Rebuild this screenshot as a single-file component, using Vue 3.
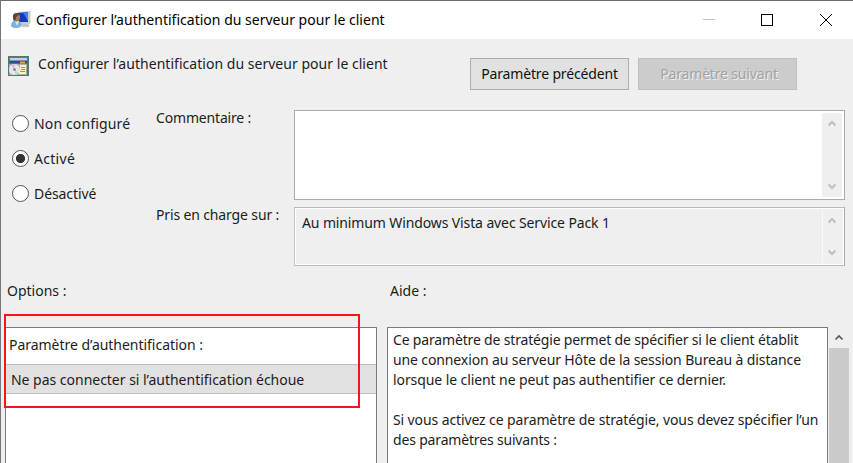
<script setup>
import { ref } from 'vue'

const state = ref('on')
const choices = [
  { id: 'none', label: 'Non configuré' },
  { id: 'on', label: 'Activé' },
  { id: 'off', label: 'Désactivé' },
]
const help = [
  'Ce paramètre de stratégie permet de spécifier si le client établit',
  'une connexion au serveur Hôte de la session Bureau à distance',
  'lorsque le client ne peut pas authentifier ce dernier.',
  '',
  'Si vous activez ce paramètre de stratégie, vous devez spécifier l’un',
  'des paramètres suivants :',
]
</script>

<template>
  <div class="window">
    <header class="titlebar">
      <svg class="app-icon" width="20" height="18" viewBox="0 0 20 18">
        <path d="M6 1 19.500 0v12l-3 2H6z" fill="#c9cbc9" />
        <path d="M7 2 17 1v10H7z" fill="#1238c8" />
        <path d="M12 1.500 17 1v9z" fill="#3d7df0" />
        <path d="M11 13h6l2 2-2 1h-6z" fill="#c5c3bc" />
        <path d="M0 15q0-5 5-6 5 1 6 5-1 3-6 3-4 0-5-2" fill="#7ab4dc" />
        <path d="M4 10l2 5 2-5z" fill="#d8edf8" />
        <ellipse cx="5.500" cy="6.500" rx="3.500" ry="4" fill="#a87a54" />
        <path d="M2 7q-1-5 4-5 3 0 3 2-4 0-4 4l-2 2z" fill="#54483c" />
      </svg>
      <span class="title">Configurer l’authentification du serveur pour le client</span>
      <svg class="controls" width="132" height="14" viewBox="0 0 132 14" fill="none" shape-rendering="crispEdges">
        <path d="M1 7.500h12" stroke="#c4c4c4" />
        <path d="M59.500 2.500h11v11h-11z" stroke="#000" />
        <path d="M118 2l12 12M130 2l-12 12" stroke="#000" shape-rendering="auto" />
      </svg>
    </header>

    <section class="heading">
      <svg class="policy-icon" width="21" height="21" viewBox="0 0 21 21">
        <path d="M0 0h21v20H0z" fill="#53796f" />
        <path d="M1 1h19v2H1z" fill="#2e8f8b" />
        <path d="M2 2h17v4H2z" fill="#c7d0e6" />
        <path d="M2 4.500h17V7H2z" fill="#344a91" />
        <path d="M12 5.500h5v2h-5z" fill="#e2a62c" />
        <path d="M1 8h18v11H1z" fill="#a9aca9" />
        <circle cx="6.500" cy="13.500" r="5.500" fill="#e6e7e8" />
        <path d="M6 13 3 9l4-1z" fill="#d4b7dd" />
        <path d="M7 14l4 3-4 2z" fill="#b8e0b8" />
        <circle cx="6.500" cy="13.500" r="1.300" fill="#777" />
        <path d="M12 9h6v9h-7v-3h1z" fill="#fff1c7" />
        <path d="M13 11.500h4M13 13.500h4M12 15.500h5" stroke="#a88d62" />
      </svg>
      <span class="policy-name">Configurer l’authentification du serveur pour le client</span>
      <button class="btn"><span class="prev">Paramètre précédent</span></button>
      <button class="btn disabled" disabled><span class="next">Paramètre suivant</span></button>
    </section>

    <section class="settings">
      <div class="radios">
        <label v-for="c in choices" :key="c.id" class="radio" @click="state = c.id">
          <span class="dot" :class="{ checked: state === c.id }"></span>
          <span :class="'t-' + c.id">{{ c.label }}</span>
        </label>
      </div>
      <div class="labels">
        <span class="l-comment">Commentaire :</span>
        <span class="l-support">Pris en charge sur :</span>
      </div>
      <div class="fields">
        <div class="field comment">
          <span></span>
          <div class="strip">
            <svg width="10" height="7" viewBox="0 0 10 7"><path d="M1.500 5.500 5 2l3.500 3.500" /></svg>
            <svg width="10" height="7" viewBox="0 0 10 7"><path d="M1.500 1.500 5 5l3.500-3.500" /></svg>
          </div>
        </div>
        <div class="field support">
          <span class="support-text">Au minimum Windows Vista avec Service Pack 1</span>
          <div class="strip">
            <svg width="10" height="7" viewBox="0 0 10 7"><path d="M1.500 5.500 5 2l3.500 3.500" /></svg>
            <svg width="10" height="7" viewBox="0 0 10 7"><path d="M1.500 1.500 5 5l3.500-3.500" /></svg>
          </div>
        </div>
      </div>
    </section>

    <section class="captions">
      <span class="c-options">Options :</span>
      <span class="c-help">Aide :</span>
    </section>

    <section class="panels">
      <div class="panel options">
        <div class="opt-label"><span>Paramètre d’authentification :</span></div>
        <div class="combo"><span>Ne pas connecter si l’authentification échoue</span></div>
        <div class="highlight"></div>
      </div>
      <div class="panel help">
        <p v-for="(line, i) in help" :key="i" :class="'h' + i">{{ line }}</p>
      </div>
      <div class="scrollbar">
        <svg width="10" height="7" viewBox="0 0 10 7"><path d="M1.500 5.500 5 2l3.500 3.500" /></svg>
        <div class="thumb"></div>
      </div>
    </section>
  </div>
</template>

<style>
body { margin: 0; overflow: hidden; }
</style>

<style scoped>
.window {
  box-sizing: border-box;
  width: 853px;
  height: 463px;
  overflow: hidden;
  display: flex;
  flex-direction: column;
  background: #efefef;
  border-top: 1px solid #6c6c6c;
  border-left: 1px solid #777;
  font: 14px/20px "Noto Sans", "Open Sans", sans-serif;
  color: #1c1c1c;
  white-space: nowrap;
}
.titlebar {
  height: 38px;
  flex: none;
  display: flex;
  align-items: center;
  background: #fff;
  color: #000;
  padding: 0 19px 0 10px;
}
.app-icon { margin-right: 5px; }
.title { letter-spacing: 0.01px; }
.controls { margin: 0 0 2px auto; }
.heading {
  height: 67px;
  flex: none;
  display: flex;
  align-items: flex-start;
  padding-left: 7px;
}
.policy-icon { margin-top: 17px; }
.policy-name { width: 432px; margin: 15px 0 0 9px; letter-spacing: 0.03px; }
.btn {
  box-sizing: border-box;
  width: 159px;
  height: 32px;
  margin: 19px 10px 0 0;
  padding: 0;
  border: 1px solid #adadad;
  background: #e1e1e1;
  color: #111;
  font: inherit;
}
.prev { letter-spacing: -0.16px; }
.next { letter-spacing: -0.16px; padding-left: 3px; }
.btn.disabled {
  margin-left: -1px;
  border-color: #bfbfbf;
  background: #ccc;
  color: #a2a2a2;
  text-shadow: 1px 1px 0 #f0f0f0;
}
.settings { height: 160px; flex: none; display: flex; }
.radios { width: 155px; display: flex; flex-direction: column; gap: 15px; padding-top: 8px; box-sizing: border-box; }
.radio { display: flex; align-items: center; gap: 5px; height: 20px; padding-left: 11px; }
.dot {
  box-sizing: border-box;
  width: 17px;
  height: 17px;
  margin-bottom: 2px;
  border: 1.500px solid #555;
  border-radius: 50%;
  background: #fff;
}
.dot.checked { background: radial-gradient(circle, #333 0 4.200px, #fff 5px); }
.t-none { letter-spacing: 0.15px; }
.t-on { letter-spacing: 0.3px; }
.t-off { letter-spacing: -0.08px; }
.labels { width: 138px; display: flex; flex-direction: column; gap: 77px; padding-top: 2px; }
.l-comment { letter-spacing: -0.17px; }
.l-support { letter-spacing: -0.14px; }
.fields { display: flex; flex-direction: column; gap: 7px; padding-top: 4px; }
.field {
  box-sizing: border-box;
  width: 551px;
  display: flex;
  justify-content: space-between;
  padding: 2px;
  border: 1px solid #aaa;
  background: #fff;
}
.comment { height: 91px; }
.support { height: 59px; box-shadow: inset 0 0 0 1px #fff; background: #efefef; border-color: #bababa #aaa #bababa #c4c4c4; }
.support-text { padding: 3px 0 0 5px; letter-spacing: -0.12px; }
.strip {
  width: 20px;
  display: flex;
  flex-direction: column;
  align-items: center;
  justify-content: space-between;
  padding: 7px 1px 7px 0;
  box-sizing: border-box;
  background: #efefef;
}
.support .strip { border-left: 1px solid #f9f9f9; padding-right: 2px; }
.strip path { fill: none; stroke: #bfbfbf; stroke-width: 2; }
.captions { display: flex; height: 61px; flex: none; padding: 15px 0 0 6px; box-sizing: border-box; }
.c-options { width: 383px; }
.panels { flex: 1; display: flex; padding-left: 4px; }
.panel { box-sizing: border-box; height: 150px; border: 1px solid #7b7b7b; background: #fff; flex: none; }
.options { width: 372px; position: relative; margin-right: 10px; }
.opt-label { height: 36px; box-sizing: border-box; padding: 7px 0 0 3px; letter-spacing: -0.03px; }
.combo { height: 30px; box-sizing: border-box; padding: 5px 0 0 5px; background: #e1e1e1; border: solid #bdbdbd; border-width: 1px 0; letter-spacing: -0.02px; }
.highlight { position: absolute; left: -2px; top: -14px; width: 356px; height: 94px; box-sizing: border-box; border: 2px solid #fb1414; }
.help { width: 441px; padding: 2px 0 0 5px; }
.help p { margin: 0; height: 20px; width: max-content; }
.h0 { letter-spacing: -0.17px; }
.h1 { letter-spacing: -0.12px; }
.h2 { letter-spacing: -0.09px; }
.h4 { letter-spacing: -0.11px; }
.h5 { letter-spacing: -0.17px; }
.scrollbar { width: 20px; margin-left: 1px; display: flex; flex-direction: column; align-items: center; }
.scrollbar svg { margin: 7px 0; flex: none; }
.scrollbar path { fill: none; stroke: #555; stroke-width: 1.600; }
.thumb { width: 20px; height: 120px; background: #cacaca; flex: none; }
</style>
